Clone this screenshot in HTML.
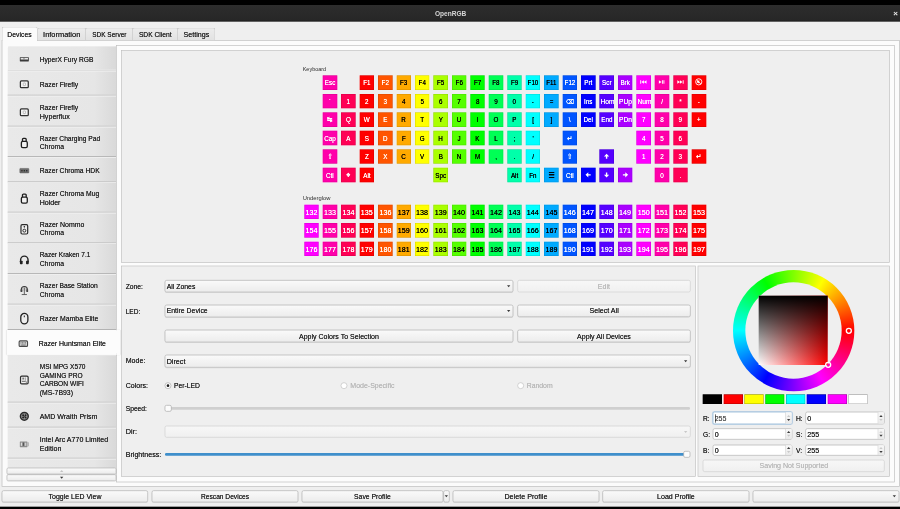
<!DOCTYPE html>
<html lang="en"><head><meta charset="utf-8"><title>OpenRGB</title>
<style>
html,body{margin:0;padding:0}
body{width:900px;height:509px;overflow:hidden;background:#efefef}
#w{filter:contrast(1.002);position:absolute;left:0;top:0;width:2700px;height:1527px;transform:scale(.333333);transform-origin:0 0;font-family:"Liberation Sans","DejaVu Sans",sans-serif;font-size:21.6px;color:#2a2a2a;line-height:25.8px}
div,span{box-sizing:border-box}
.a{position:absolute}
.t{position:absolute;white-space:nowrap;transform-origin:0 50%;transform:scaleX(.9);text-shadow:0 0 0.42px currentColor}
.tc{position:absolute;white-space:nowrap;text-align:center;transform:scaleX(.9);text-shadow:0 0 0.9px currentColor}
.frame{position:absolute;border:2.1px solid #bebebe}
.btn{position:absolute;border:2.1px solid #b2b2b2;border-radius:6px;background:linear-gradient(#fafafa,#ececec);box-shadow:0 1.8px 1.8px rgba(0,0,0,.10);text-align:center}
.btn.dis{background:linear-gradient(#f7f7f7,#f0f0f0);border-color:#d0d0d0;box-shadow:none;color:#bababa}
.btn span{display:inline-block;transform:scaleX(.9);text-shadow:0 0 0.42px currentColor}
.tab{position:absolute;border:2.1px solid #bdbdbd;border-bottom:none;border-radius:6px 6px 0 0;background:linear-gradient(#ececec,#e2e2e2);text-align:center}
.tab span{display:inline-block;transform:scaleX(.9);text-shadow:0 0 0.6px currentColor}
.item{position:absolute;left:22.5px;width:325.8px;background:linear-gradient(90deg,#e9e9e9 0,#e6e6e6 80%,#d9d9d9 100%);border-top:2.1px solid #ececec;border-bottom:3px solid #b8b8b8}
.item.sel{z-index:3;left:20.1px;width:340.8px;background:linear-gradient(#fcfcfc,#fcfcfc);border-color:#fcfcfc;box-shadow:0 0 3px rgba(0,0,0,.25)}
.item .lbl{position:absolute;left:96px;top:5.4px;bottom:0;display:flex;align-items:center}
.item .lbl span{display:block;transform-origin:0 50%;transform:scaleX(.925);text-shadow:0 0 0.66px currentColor}
.item svg{position:absolute;left:32.85px;top:50%;margin-top:-14.1px;overflow:visible}
.item.sel svg{left:31.8px}
.key{background:linear-gradient(var(--c),var(--c));position:absolute;width:43.5px;height:43.5px;overflow:hidden;text-align:center;line-height:45.6px;font-size:21.9px;box-shadow:inset 0 0 0 1.5px rgba(0,0,0,.16)}
.key span{display:inline-block;transform:scaleX(.86);white-space:nowrap;text-shadow:0 0 0.3px currentColor}
.key svg{position:absolute;left:0;top:0}
.key.n span{transform:scaleX(.98)}
.spin{position:absolute;border:2.1px solid #b4b4b4;border-radius:6px;background:linear-gradient(#fff,#fff)}
.spin .v{position:absolute;left:3.9px;top:1.2px;bottom:0;display:flex;align-items:center;transform-origin:0 50%;transform:scaleX(.96);font-size:22.2px;text-shadow:0 0 0.45px currentColor}
.spin .ud{position:absolute;right:0;top:0;bottom:0;width:19.2px;border-left:2.1px solid #d4d4d4;background:linear-gradient(#f8f8f8,#e9e9e9)}
.arr{position:absolute;width:0;height:0;border-left:5.1px solid transparent;border-right:5.1px solid transparent}
.arr.dn{border-top:6.3px solid #3a3a3a}
.arr.up{border-bottom:6.3px solid #3a3a3a}
.sw{position:absolute;top:1182.9px;height:29.1px;width:57.9px;box-shadow:inset 0 0 0 1.8px rgba(0,0,0,.32)}
</style></head>
<body><div id="w">
<div class="a" style="left:0;top:0;width:2700px;height:64.5px;background:linear-gradient(#000 0,#000 14.4px,#2d2d2d 14.7px,#272727 61.2px,#1c1c1c 62.1px,#1c1c1c 64.5px)"></div>
<div class="tc" style="left:1201.8px;width:300px;top:27.3px;font-weight:bold;color:#d6d6d6;font-size:21.6px;text-shadow:none;transform:scaleX(0.91)">OpenRGB</div>
<div class="a" style="left:2679.6px;top:25.8px;color:#e8e8e8;font-size:24px;font-weight:bold;line-height:27px">×</div>
<div class="a" style="left:0;top:1519.8px;width:2700px;height:9px;background:#000"></div>
<div class="frame" style="left:4.5px;top:120px;width:2694px;height:1339.5px;background:linear-gradient(#fbfbfb,#fbfbfb);border-color:#bdbdbd"></div>
<div class="tab" style="left:4.5px;top:79.8px;width:108.3px;height:43.8px;background:linear-gradient(#fbfbfb,#fbfbfb);line-height:45.6px;z-index:2"><span style="transform:scaleX(0.945)">Devices</span></div>
<div class="tab" style="left:111.9px;top:83.1px;width:147px;height:37.8px;line-height:37.2px"><span style="transform:scaleX(1.033)">Information</span></div>
<div class="tab" style="left:255.9px;top:83.1px;width:144px;height:37.8px;line-height:37.2px"><span style="transform:scaleX(0.902)">SDK Server</span></div>
<div class="tab" style="left:396.9px;top:83.1px;width:138px;height:37.8px;line-height:37.2px"><span style="transform:scaleX(0.931)">SDK Client</span></div>
<div class="tab" style="left:531.9px;top:83.1px;width:114px;height:37.8px;line-height:37.2px"><span style="transform:scaleX(0.992)">Settings</span></div>
<div class="frame" style="left:348px;top:135.6px;width:2337px;height:1311px;background:linear-gradient(#fcfcfc,#fcfcfc)"></div>
<div class="a" style="left:22.5px;top:135px;width:325.8px;height:1267.2px;border-radius:6px 0 0 0;overflow:hidden"></div>
<div class="item" style="top:137.1px;height:75.3px;border-radius:7.5px 0 0 0"><svg width="36" height="36" viewBox="0 0 12 12"><rect x="1.5" y="3.85" width="9" height="4.3" rx=".4" fill="#3a3a3a"/><rect x="2.3" y="4.6" width="3" height="1.6" fill="#e6e6e6"/><rect x="6" y="4.6" width="3.7" height="1.6" fill="#e6e6e6"/><rect x="5.3" y="5.4" width=".7" height=".8" fill="#e6e6e6"/></svg><div class="lbl" style="top:9.6px"><div><span style="transform:scaleX(0.927)">HyperX Fury RGB</span></div></div></div>
<div class="item" style="top:212.4px;height:75px"><svg width="36" height="36" viewBox="0 0 12 12"><rect x="2.05" y="2.6" width="7.9" height="6.8" rx="1" fill="#f3f3f3" stroke="#333" stroke-width="1.25"/><rect x="4.9" y="4.6" width="2.2" height="2.7" rx=".4" fill="#fafafa" stroke="#9a9a9a" stroke-width=".6"/></svg><div class="lbl" style="top:9.6px"><div><span style="transform:scaleX(0.943)">Razer Firefly</span></div></div></div>
<div class="item" style="top:287.4px;height:92.4px"><svg width="36" height="36" viewBox="0 0 12 12"><rect x="2.05" y="2.6" width="7.9" height="6.8" rx="1" fill="#f3f3f3" stroke="#333" stroke-width="1.25"/><rect x="4.9" y="4.6" width="2.2" height="2.7" rx=".4" fill="#fafafa" stroke="#9a9a9a" stroke-width=".6"/></svg><div class="lbl"><div><span style="transform:scaleX(0.943)">Razer Firefly</span><span style="transform:scaleX(0.993)">Hyperflux</span></div></div></div>
<div class="item" style="top:379.8px;height:91.2px"><svg width="36" height="36" viewBox="0 0 12 12"><path d="M4.15 4.3 V2.4 a.95 .95 0 0 1 .95 -.95 h1.8 a.95 .95 0 0 1 .95 .95 V4.3" fill="#e8e8e8" stroke="#1e1e1e" stroke-width="1.3"/><rect x="3.05" y="4.45" width="5.9" height="6.1" rx="1.4" fill="#f2f2f2" stroke="#1e1e1e" stroke-width="1.3"/></svg><div class="lbl"><div><span style="transform:scaleX(0.927)">Razer Charging Pad</span><span style="transform:scaleX(0.949)">Chroma</span></div></div></div>
<div class="item" style="top:471px;height:75.6px"><svg width="36" height="36" viewBox="0 0 12 12"><rect x="1.5" y="3.75" width="9" height="4.5" rx=".5" fill="#6e6e6e"/><rect x="1.5" y="3.75" width="9" height="4.5" rx=".5" fill="none" stroke="#5a5a5a" stroke-width=".5"/><circle cx="3.6" cy="6" r=".75" fill="#2a2020"/><circle cx="6" cy="6" r=".75" fill="#202a20"/><circle cx="8.4" cy="6" r=".75" fill="#20202a"/></svg><div class="lbl" style="top:9.6px"><div><span style="transform:scaleX(0.937)">Razer Chroma HDK</span></div></div></div>
<div class="item" style="top:546.6px;height:91.8px"><svg width="36" height="36" viewBox="0 0 12 12"><path d="M4.15 4.3 V2.4 a.95 .95 0 0 1 .95 -.95 h1.8 a.95 .95 0 0 1 .95 .95 V4.3" fill="#e8e8e8" stroke="#1e1e1e" stroke-width="1.3"/><rect x="3.05" y="4.45" width="5.9" height="6.1" rx="1.4" fill="#f2f2f2" stroke="#1e1e1e" stroke-width="1.3"/></svg><div class="lbl"><div><span style="transform:scaleX(0.95)">Razer Chroma Mug</span><span style="transform:scaleX(0.981)">Holder</span></div></div></div>
<div class="item" style="top:638.4px;height:91.8px"><svg width="36" height="36" viewBox="0 0 12 12"><rect x="2.65" y="1.35" width="6.7" height="9.3" rx="1.2" fill="#eeeeee" stroke="#2a2a2a" stroke-width="1.2"/><circle cx="6" cy="3.5" r=".8" fill="#222"/><circle cx="6" cy="7.3" r="1.45" fill="#f6f6f6" stroke="#2a2a2a" stroke-width="1"/></svg><div class="lbl"><div><span style="transform:scaleX(0.963)">Razer Nommo</span><span style="transform:scaleX(0.949)">Chroma</span></div></div></div>
<div class="item" style="top:730.2px;height:91.8px"><svg width="36" height="36" viewBox="0 0 12 12"><path d="M2.3 8.8 V6.2 a3.7 3.7 0 0 1 7.4 0 V8.8" fill="none" stroke="#222" stroke-width="1.4"/><rect x="1.6" y="7" width="2.7" height="3.5" rx=".7" fill="#222"/><rect x="7.7" y="7" width="2.7" height="3.5" rx=".7" fill="#222"/></svg><div class="lbl"><div><span style="transform:scaleX(0.905)">Razer Kraken 7.1</span><span style="transform:scaleX(0.949)">Chroma</span></div></div></div>
<div class="item" style="top:822px;height:92.1px"><svg width="36" height="36" viewBox="0 0 12 12"><path d="M3 6.8 V5.2 a3 3 0 0 1 6 0 V6.8" fill="#d0d0d0" stroke="#3a3a3a" stroke-width="1.1"/><rect x="2.2" y="4.8" width="1.8" height="2.8" rx=".5" fill="#444"/><rect x="8" y="4.8" width="1.8" height="2.8" rx=".5" fill="#444"/><path d="M6 3.2 V10.2" stroke="#666" stroke-width="1"/><path d="M3.4 10.2 H8.6" stroke="#555" stroke-width=".9"/></svg><div class="lbl"><div><span style="transform:scaleX(0.935)">Razer Base Station</span><span style="transform:scaleX(0.949)">Chroma</span></div></div></div>
<div class="item" style="top:914.1px;height:76.2px"><svg width="36" height="36" viewBox="0 0 12 12"><rect x="2.45" y=".75" width="7.1" height="10.5" rx="3.55" fill="#ededed" stroke="#222" stroke-width="1.3"/><path d="M6 2.9 V4.7" stroke="#333" stroke-width="1.1"/></svg><div class="lbl" style="top:9.6px"><div><span style="transform:scaleX(0.959)">Razer Mamba Elite</span></div></div></div>
<div class="item sel" style="top:990.3px;height:74.1px"><svg width="36" height="36" viewBox="0 0 12 12"><rect x="1.8" y="3.25" width="8.4" height="5.5" rx="1" fill="#d8d8d8" stroke="#4a4a4a" stroke-width="1.1"/><path d="M3.2 5 h5.6" stroke="#666" stroke-width=".8" stroke-dasharray="1 .5"/><path d="M3.2 6.2 h5.6" stroke="#777" stroke-width=".8" stroke-dasharray=".9 .6"/><path d="M3.8 7.4 h4.4" stroke="#666" stroke-width=".8"/></svg><div class="lbl" style="top:9.6px"><div><span style="transform:scaleX(0.961)">Razer Huntsman Elite</span></div></div></div>
<div class="item" style="top:1064.4px;height:144px"><svg width="36" height="36" viewBox="0 0 12 12"><rect x="2.2" y="2.1" width="7.6" height="7.8" rx="1.2" fill="#f1f1f1" stroke="#2c2c2c" stroke-width="1.2"/><rect x="4" y="3.6" width="1.9" height="1.9" fill="#777"/><path d="M7.2 3.4 V6.6" stroke="#999" stroke-width=".8"/><path d="M3.6 7.3 H7.4" stroke="#555" stroke-width=".9"/><circle cx="8" cy="8.1" r=".6" fill="#555"/></svg><div class="lbl"><div><span style="transform:scaleX(0.916)">MSI MPG X570</span><span style="transform:scaleX(0.919)">GAMING PRO</span><span style="transform:scaleX(0.923)">CARBON WIFI</span><span style="transform:scaleX(0.957)">(MS-7B93)</span></div></div></div>
<div class="item" style="top:1208.4px;height:75px"><svg width="36" height="36" viewBox="0 0 12 12"><circle cx="6" cy="6" r="3.9" fill="#9a9a9a" stroke="#2b2b2b" stroke-width="1.5"/><circle cx="4.8" cy="4.8" r="1" fill="#222"/><circle cx="7.2" cy="4.8" r="1" fill="#222"/><circle cx="4.8" cy="7.2" r="1" fill="#222"/><circle cx="7.2" cy="7.2" r="1" fill="#222"/><circle cx="6" cy="6" r=".7" fill="#444"/></svg><div class="lbl" style="top:9.6px"><div><span style="transform:scaleX(0.977)">AMD Wraith Prism</span></div></div></div>
<div class="item" style="top:1283.4px;height:92.4px"><svg width="36" height="36" viewBox="0 0 12 12"><rect x="1.5" y="3.2" width="7.6" height="5.6" rx=".4" fill="#8c8c8c"/><path d="M9.1 3.6 h.4 a1.1 1.1 0 0 1 1.1 1.1 v2.4 a1.1 1.1 0 0 1 -1.1 1.1 h-.4z" fill="#b4b4b4"/><rect x="2.5" y="4.3" width="1.3" height="3.2" fill="#dcdcdc"/><rect x="4.6" y="4.3" width="1.1" height="3.2" fill="#555"/><rect x="6.4" y="4.3" width="1.6" height="3.2" fill="#cfcfcf"/></svg><div class="lbl"><div><span style="transform:scaleX(0.984)">Intel Arc A770 Limited</span><span style="transform:scaleX(0.986)">Edition</span></div></div></div>
<div class="item" style="top:1375.8px;height:27.9px;border-bottom:none"><div class="lbl"><div></div></div></div>
<div class="btn" style="left:20.1px;top:1403.4px;width:328.8px;height:19.8px;border-radius:4.5px"><div class="arr up" style="left:157.8px;top:4.2px;border-bottom-color:#c4c4c4"></div></div>
<div class="btn" style="left:20.1px;top:1423.2px;width:328.8px;height:20.1px;border-radius:4.5px"><div class="arr dn" style="left:157.8px;top:4.8px"></div></div>
<div class="frame" style="left:363px;top:150px;width:2307px;height:639px;background:linear-gradient(#efefef,#efefef)"></div>
<div class="frame" style="left:363px;top:796.5px;width:1723.5px;height:633.9px;background:linear-gradient(#efefef,#efefef)"></div>
<div class="frame" style="left:2093.1px;top:796.5px;width:577.2px;height:633.9px;background:linear-gradient(#efefef,#efefef)"></div>
<div class="t" style="left:907.5px;top:195px;font-size:18px;color:#2c2c2c;text-shadow:none;transform:scaleX(0.915)">Keyboard</div>
<div class="key" style="left:968.1px;top:226.35px;--c:#ff00aa;color:#fff"><span>Esc</span></div>
<div class="key" style="left:1078.8px;top:226.35px;--c:#ff0000;color:#fff"><span>F1</span></div>
<div class="key" style="left:1134.15px;top:226.35px;--c:#ff5500;color:#fff"><span>F2</span></div>
<div class="key" style="left:1189.5px;top:226.35px;--c:#ffaa00;color:#000"><span>F3</span></div>
<div class="key" style="left:1244.85px;top:226.35px;--c:#ffff00;color:#000"><span>F4</span></div>
<div class="key" style="left:1300.2px;top:226.35px;--c:#aaff00;color:#000"><span>F5</span></div>
<div class="key" style="left:1355.55px;top:226.35px;--c:#55ff00;color:#000"><span>F6</span></div>
<div class="key" style="left:1410.9px;top:226.35px;--c:#00ff00;color:#000"><span>F7</span></div>
<div class="key" style="left:1466.25px;top:226.35px;--c:#00ff55;color:#000"><span>F8</span></div>
<div class="key" style="left:1521.6px;top:226.35px;--c:#00ffaa;color:#000"><span>F9</span></div>
<div class="key" style="left:1576.95px;top:226.35px;--c:#00ffff;color:#000"><span>F10</span></div>
<div class="key" style="left:1632.3px;top:226.35px;--c:#00aaff;color:#000"><span>F11</span></div>
<div class="key" style="left:1687.65px;top:226.35px;--c:#0055ff;color:#fff"><span>F12</span></div>
<div class="key" style="left:1743px;top:226.35px;--c:#0000ff;color:#fff"><span>Prt</span></div>
<div class="key" style="left:1798.35px;top:226.35px;--c:#5500ff;color:#fff"><span>Scr</span></div>
<div class="key" style="left:1853.7px;top:226.35px;--c:#aa00ff;color:#fff"><span>Brk</span></div>
<div class="key" style="left:1909.05px;top:226.35px;--c:#ff00ff;color:#fff"><svg width="44.4" height="44.4" viewBox="0 0 14.8 14.8" fill="#fff" stroke="none"><rect x="3.9" y="4.9" width=".9" height="3.5"/><path d="M7.6 4.9 L5 6.65 L7.6 8.4Z M10.2 4.9 L7.6 6.65 L10.2 8.4Z"/></svg></div>
<div class="key" style="left:1964.4px;top:226.35px;--c:#ff00aa;color:#fff"><svg width="44.4" height="44.4" viewBox="0 0 14.8 14.8" fill="#fff" stroke="none"><path d="M4.2 4.9 L6.9 6.65 L4.2 8.4Z"/><rect x="7.3" y="4.9" width=".9" height="3.5"/><rect x="8.8" y="4.9" width=".9" height="3.5"/></svg></div>
<div class="key" style="left:2019.75px;top:226.35px;--c:#ff0055;color:#fff"><svg width="44.4" height="44.4" viewBox="0 0 14.8 14.8" fill="#fff" stroke="none"><path d="M4 4.9 L6.6 6.65 L4 8.4Z M6.6 4.9 L9.2 6.65 L6.6 8.4Z"/><rect x="9.4" y="4.9" width=".9" height="3.5"/></svg></div>
<div class="key" style="left:2075.1px;top:226.35px;--c:#ff0000;color:#fff"><svg width="44.4" height="44.4" viewBox="0 0 14.8 14.8" fill="#fff" stroke="none"><circle cx="7.1" cy="6.5" r="3.1" fill="none" stroke="#fff" stroke-width=".9"/><path d="M5.4 5.7 h1 l1.2-1 v3.6 l-1.2-1 h-1z"/><path d="M5.2 4.4 L9.2 8.6" stroke="#fff" stroke-width=".8"/></svg></div>
<div class="key" style="left:968.1px;top:281.7px;--c:#ff00aa;color:#fff"><span>`</span></div>
<div class="key" style="left:1023.45px;top:281.7px;--c:#ff0055;color:#fff"><span>1</span></div>
<div class="key" style="left:1078.8px;top:281.7px;--c:#ff0000;color:#fff"><span>2</span></div>
<div class="key" style="left:1134.15px;top:281.7px;--c:#ff5500;color:#fff"><span>3</span></div>
<div class="key" style="left:1189.5px;top:281.7px;--c:#ffaa00;color:#000"><span>4</span></div>
<div class="key" style="left:1244.85px;top:281.7px;--c:#ffff00;color:#000"><span>5</span></div>
<div class="key" style="left:1300.2px;top:281.7px;--c:#aaff00;color:#000"><span>6</span></div>
<div class="key" style="left:1355.55px;top:281.7px;--c:#55ff00;color:#000"><span>7</span></div>
<div class="key" style="left:1410.9px;top:281.7px;--c:#00ff00;color:#000"><span>8</span></div>
<div class="key" style="left:1466.25px;top:281.7px;--c:#00ff55;color:#000"><span>9</span></div>
<div class="key" style="left:1521.6px;top:281.7px;--c:#00ffaa;color:#000"><span>0</span></div>
<div class="key" style="left:1576.95px;top:281.7px;--c:#00ffff;color:#000"><span>-</span></div>
<div class="key" style="left:1632.3px;top:281.7px;--c:#00aaff;color:#000"><span>=</span></div>
<div class="key" style="left:1687.65px;top:281.7px;--c:#0055ff;color:#fff;font-size:19.5px"><span>⌫</span></div>
<div class="key" style="left:1743px;top:281.7px;--c:#0000ff;color:#fff"><span>Ins</span></div>
<div class="key" style="left:1798.35px;top:281.7px;--c:#5500ff;color:#fff;font-size:23.1px"><span>Hom</span></div>
<div class="key" style="left:1853.7px;top:281.7px;--c:#aa00ff;color:#fff;font-size:23.1px"><span>PUp</span></div>
<div class="key" style="left:1909.05px;top:281.7px;--c:#ff00ff;color:#fff;font-size:23.1px"><span>Num</span></div>
<div class="key" style="left:1964.4px;top:281.7px;--c:#ff00aa;color:#fff"><span>/</span></div>
<div class="key" style="left:2019.75px;top:281.7px;--c:#ff0055;color:#fff"><span>*</span></div>
<div class="key" style="left:2075.1px;top:281.7px;--c:#ff0000;color:#fff"><span>-</span></div>
<div class="key" style="left:968.1px;top:337.05px;--c:#ff00aa;color:#fff;font-size:22.8px"><span>↹</span></div>
<div class="key" style="left:1023.45px;top:337.05px;--c:#ff0055;color:#fff"><span>Q</span></div>
<div class="key" style="left:1078.8px;top:337.05px;--c:#ff0000;color:#fff"><span>W</span></div>
<div class="key" style="left:1134.15px;top:337.05px;--c:#ff5500;color:#fff"><span>E</span></div>
<div class="key" style="left:1189.5px;top:337.05px;--c:#ffaa00;color:#000"><span>R</span></div>
<div class="key" style="left:1244.85px;top:337.05px;--c:#ffff00;color:#000"><span>T</span></div>
<div class="key" style="left:1300.2px;top:337.05px;--c:#aaff00;color:#000"><span>Y</span></div>
<div class="key" style="left:1355.55px;top:337.05px;--c:#55ff00;color:#000"><span>U</span></div>
<div class="key" style="left:1410.9px;top:337.05px;--c:#00ff00;color:#000"><span>I</span></div>
<div class="key" style="left:1466.25px;top:337.05px;--c:#00ff55;color:#000"><span>O</span></div>
<div class="key" style="left:1521.6px;top:337.05px;--c:#00ffaa;color:#000"><span>P</span></div>
<div class="key" style="left:1576.95px;top:337.05px;--c:#00ffff;color:#000"><span>[</span></div>
<div class="key" style="left:1632.3px;top:337.05px;--c:#00aaff;color:#000"><span>]</span></div>
<div class="key" style="left:1687.65px;top:337.05px;--c:#0055ff;color:#fff"><span>\</span></div>
<div class="key" style="left:1743px;top:337.05px;--c:#0000ff;color:#fff"><span>Del</span></div>
<div class="key" style="left:1798.35px;top:337.05px;--c:#5500ff;color:#fff"><span>End</span></div>
<div class="key" style="left:1853.7px;top:337.05px;--c:#aa00ff;color:#fff;font-size:23.1px"><span>PDn</span></div>
<div class="key" style="left:1909.05px;top:337.05px;--c:#ff00ff;color:#fff"><span>7</span></div>
<div class="key" style="left:1964.4px;top:337.05px;--c:#ff00aa;color:#fff"><span>8</span></div>
<div class="key" style="left:2019.75px;top:337.05px;--c:#ff0055;color:#fff"><span>9</span></div>
<div class="key" style="left:2075.1px;top:337.05px;--c:#ff0000;color:#fff"><span>+</span></div>
<div class="key" style="left:968.1px;top:392.4px;--c:#ff00aa;color:#fff"><span>Cap</span></div>
<div class="key" style="left:1023.45px;top:392.4px;--c:#ff0055;color:#fff"><span>A</span></div>
<div class="key" style="left:1078.8px;top:392.4px;--c:#ff0000;color:#fff"><span>S</span></div>
<div class="key" style="left:1134.15px;top:392.4px;--c:#ff5500;color:#fff"><span>D</span></div>
<div class="key" style="left:1189.5px;top:392.4px;--c:#ffaa00;color:#000"><span>F</span></div>
<div class="key" style="left:1244.85px;top:392.4px;--c:#ffff00;color:#000"><span>G</span></div>
<div class="key" style="left:1300.2px;top:392.4px;--c:#aaff00;color:#000"><span>H</span></div>
<div class="key" style="left:1355.55px;top:392.4px;--c:#55ff00;color:#000"><span>J</span></div>
<div class="key" style="left:1410.9px;top:392.4px;--c:#00ff00;color:#000"><span>K</span></div>
<div class="key" style="left:1466.25px;top:392.4px;--c:#00ff55;color:#000"><span>L</span></div>
<div class="key" style="left:1521.6px;top:392.4px;--c:#00ffaa;color:#000"><span>;</span></div>
<div class="key" style="left:1576.95px;top:392.4px;--c:#00ffff;color:#000"><span>&#x27;</span></div>
<div class="key" style="left:1687.65px;top:392.4px;--c:#0055ff;color:#fff;font-size:22.8px"><span>↵</span></div>
<div class="key" style="left:1909.05px;top:392.4px;--c:#ff00ff;color:#fff"><span>4</span></div>
<div class="key" style="left:1964.4px;top:392.4px;--c:#ff00aa;color:#fff"><span>5</span></div>
<div class="key" style="left:2019.75px;top:392.4px;--c:#ff0055;color:#fff"><span>6</span></div>
<div class="key" style="left:968.1px;top:447.75px;--c:#ff00aa;color:#fff;font-size:22.2px"><span>⇧</span></div>
<div class="key" style="left:1078.8px;top:447.75px;--c:#ff0000;color:#fff"><span>Z</span></div>
<div class="key" style="left:1134.15px;top:447.75px;--c:#ff5500;color:#fff"><span>X</span></div>
<div class="key" style="left:1189.5px;top:447.75px;--c:#ffaa00;color:#000"><span>C</span></div>
<div class="key" style="left:1244.85px;top:447.75px;--c:#ffff00;color:#000"><span>V</span></div>
<div class="key" style="left:1300.2px;top:447.75px;--c:#aaff00;color:#000"><span>B</span></div>
<div class="key" style="left:1355.55px;top:447.75px;--c:#55ff00;color:#000"><span>N</span></div>
<div class="key" style="left:1410.9px;top:447.75px;--c:#00ff00;color:#000"><span>M</span></div>
<div class="key" style="left:1466.25px;top:447.75px;--c:#00ff55;color:#000"><span>,</span></div>
<div class="key" style="left:1521.6px;top:447.75px;--c:#00ffaa;color:#000"><span>.</span></div>
<div class="key" style="left:1576.95px;top:447.75px;--c:#00ffff;color:#000"><span>/</span></div>
<div class="key" style="left:1687.65px;top:447.75px;--c:#0055ff;color:#fff;font-size:22.2px"><span>⇧</span></div>
<div class="key" style="left:1798.35px;top:447.75px;--c:#5500ff;color:#fff;font-size:18px"><svg width="44.4" height="44.4" viewBox="0 0 14.8 14.8" fill="#fff" stroke="none"><path d="M7.25 4.4 L9.85 7.2 H7.95 V9.4 H6.55 V7.2 H4.65Z"/></svg></div>
<div class="key" style="left:1909.05px;top:447.75px;--c:#ff00ff;color:#fff"><span>1</span></div>
<div class="key" style="left:1964.4px;top:447.75px;--c:#ff00aa;color:#fff"><span>2</span></div>
<div class="key" style="left:2019.75px;top:447.75px;--c:#ff0055;color:#fff"><span>3</span></div>
<div class="key" style="left:2075.1px;top:447.75px;--c:#ff0000;color:#fff;font-size:22.8px"><span>↵</span></div>
<div class="key" style="left:968.1px;top:503.1px;--c:#ff00aa;color:#fff"><span>Ctl</span></div>
<div class="key" style="left:1023.45px;top:503.1px;--c:#ff0055;color:#fff;font-size:18px"><span>❖</span></div>
<div class="key" style="left:1078.8px;top:503.1px;--c:#ff0000;color:#fff"><span>Alt</span></div>
<div class="key" style="left:1300.2px;top:503.1px;--c:#aaff00;color:#000"><span>Spc</span></div>
<div class="key" style="left:1521.6px;top:503.1px;--c:#00ffaa;color:#000"><span>Alt</span></div>
<div class="key" style="left:1576.95px;top:503.1px;--c:#00ffff;color:#000"><span>Fn</span></div>
<div class="key" style="left:1632.3px;top:503.1px;--c:#00aaff;color:#000;font-size:25.2px"><span>☰</span></div>
<div class="key" style="left:1687.65px;top:503.1px;--c:#0055ff;color:#fff"><span>Ctl</span></div>
<div class="key" style="left:1743px;top:503.1px;--c:#0000ff;color:#fff;font-size:18px"><svg width="44.4" height="44.4" viewBox="0 0 14.8 14.8" fill="#fff" stroke="none"><path d="M4.5 7.2 L7.3 4.6 V6.5 H9.7 V7.9 H7.3 V9.8Z"/></svg></div>
<div class="key" style="left:1798.35px;top:503.1px;--c:#5500ff;color:#fff;font-size:18px"><svg width="44.4" height="44.4" viewBox="0 0 14.8 14.8" fill="#fff" stroke="none"><path d="M7.25 9.8 L9.85 7 H7.95 V4.8 H6.55 V7 H4.65Z"/></svg></div>
<div class="key" style="left:1853.7px;top:503.1px;--c:#aa00ff;color:#fff;font-size:18px"><svg width="44.4" height="44.4" viewBox="0 0 14.8 14.8" fill="#fff" stroke="none"><path d="M10.1 7.2 L7.3 4.6 V6.5 H4.9 V7.9 H7.3 V9.8Z"/></svg></div>
<div class="key" style="left:1964.4px;top:503.1px;--c:#ff00aa;color:#fff"><span>0</span></div>
<div class="key" style="left:2019.75px;top:503.1px;--c:#ff0055;color:#fff"><span>.</span></div>
<div class="t" style="left:907.5px;top:581.1px;font-size:18px;color:#2c2c2c;text-shadow:none;transform:scaleX(0.966)">Underglow</div>
<div class="key n" style="left:912.75px;top:613.8px;--c:#ff00ff;color:#fff"><span>132</span></div>
<div class="key n" style="left:968.1px;top:613.8px;--c:#ff00aa;color:#fff"><span>133</span></div>
<div class="key n" style="left:1023.45px;top:613.8px;--c:#ff0055;color:#fff"><span>134</span></div>
<div class="key n" style="left:1078.8px;top:613.8px;--c:#ff0000;color:#fff"><span>135</span></div>
<div class="key n" style="left:1134.15px;top:613.8px;--c:#ff5500;color:#fff"><span>136</span></div>
<div class="key n" style="left:1189.5px;top:613.8px;--c:#ffaa00;color:#000"><span>137</span></div>
<div class="key n" style="left:1244.85px;top:613.8px;--c:#ffff00;color:#000"><span>138</span></div>
<div class="key n" style="left:1300.2px;top:613.8px;--c:#aaff00;color:#000"><span>139</span></div>
<div class="key n" style="left:1355.55px;top:613.8px;--c:#55ff00;color:#000"><span>140</span></div>
<div class="key n" style="left:1410.9px;top:613.8px;--c:#00ff00;color:#000"><span>141</span></div>
<div class="key n" style="left:1466.25px;top:613.8px;--c:#00ff55;color:#000"><span>142</span></div>
<div class="key n" style="left:1521.6px;top:613.8px;--c:#00ffaa;color:#000"><span>143</span></div>
<div class="key n" style="left:1576.95px;top:613.8px;--c:#00ffff;color:#000"><span>144</span></div>
<div class="key n" style="left:1632.3px;top:613.8px;--c:#00aaff;color:#000"><span>145</span></div>
<div class="key n" style="left:1687.65px;top:613.8px;--c:#0055ff;color:#fff"><span>146</span></div>
<div class="key n" style="left:1743px;top:613.8px;--c:#0000ff;color:#fff"><span>147</span></div>
<div class="key n" style="left:1798.35px;top:613.8px;--c:#5500ff;color:#fff"><span>148</span></div>
<div class="key n" style="left:1853.7px;top:613.8px;--c:#aa00ff;color:#fff"><span>149</span></div>
<div class="key n" style="left:1909.05px;top:613.8px;--c:#ff00ff;color:#fff"><span>150</span></div>
<div class="key n" style="left:1964.4px;top:613.8px;--c:#ff00aa;color:#fff"><span>151</span></div>
<div class="key n" style="left:2019.75px;top:613.8px;--c:#ff0055;color:#fff"><span>152</span></div>
<div class="key n" style="left:2075.1px;top:613.8px;--c:#ff0000;color:#fff"><span>153</span></div>
<div class="key n" style="left:912.75px;top:669.15px;--c:#ff00ff;color:#fff"><span>154</span></div>
<div class="key n" style="left:968.1px;top:669.15px;--c:#ff00aa;color:#fff"><span>155</span></div>
<div class="key n" style="left:1023.45px;top:669.15px;--c:#ff0055;color:#fff"><span>156</span></div>
<div class="key n" style="left:1078.8px;top:669.15px;--c:#ff0000;color:#fff"><span>157</span></div>
<div class="key n" style="left:1134.15px;top:669.15px;--c:#ff5500;color:#fff"><span>158</span></div>
<div class="key n" style="left:1189.5px;top:669.15px;--c:#ffaa00;color:#000"><span>159</span></div>
<div class="key n" style="left:1244.85px;top:669.15px;--c:#ffff00;color:#000"><span>160</span></div>
<div class="key n" style="left:1300.2px;top:669.15px;--c:#aaff00;color:#000"><span>161</span></div>
<div class="key n" style="left:1355.55px;top:669.15px;--c:#55ff00;color:#000"><span>162</span></div>
<div class="key n" style="left:1410.9px;top:669.15px;--c:#00ff00;color:#000"><span>163</span></div>
<div class="key n" style="left:1466.25px;top:669.15px;--c:#00ff55;color:#000"><span>164</span></div>
<div class="key n" style="left:1521.6px;top:669.15px;--c:#00ffaa;color:#000"><span>165</span></div>
<div class="key n" style="left:1576.95px;top:669.15px;--c:#00ffff;color:#000"><span>166</span></div>
<div class="key n" style="left:1632.3px;top:669.15px;--c:#00aaff;color:#000"><span>167</span></div>
<div class="key n" style="left:1687.65px;top:669.15px;--c:#0055ff;color:#fff"><span>168</span></div>
<div class="key n" style="left:1743px;top:669.15px;--c:#0000ff;color:#fff"><span>169</span></div>
<div class="key n" style="left:1798.35px;top:669.15px;--c:#5500ff;color:#fff"><span>170</span></div>
<div class="key n" style="left:1853.7px;top:669.15px;--c:#aa00ff;color:#fff"><span>171</span></div>
<div class="key n" style="left:1909.05px;top:669.15px;--c:#ff00ff;color:#fff"><span>172</span></div>
<div class="key n" style="left:1964.4px;top:669.15px;--c:#ff00aa;color:#fff"><span>173</span></div>
<div class="key n" style="left:2019.75px;top:669.15px;--c:#ff0055;color:#fff"><span>174</span></div>
<div class="key n" style="left:2075.1px;top:669.15px;--c:#ff0000;color:#fff"><span>175</span></div>
<div class="key n" style="left:912.75px;top:724.5px;--c:#ff00ff;color:#fff"><span>176</span></div>
<div class="key n" style="left:968.1px;top:724.5px;--c:#ff00aa;color:#fff"><span>177</span></div>
<div class="key n" style="left:1023.45px;top:724.5px;--c:#ff0055;color:#fff"><span>178</span></div>
<div class="key n" style="left:1078.8px;top:724.5px;--c:#ff0000;color:#fff"><span>179</span></div>
<div class="key n" style="left:1134.15px;top:724.5px;--c:#ff5500;color:#fff"><span>180</span></div>
<div class="key n" style="left:1189.5px;top:724.5px;--c:#ffaa00;color:#000"><span>181</span></div>
<div class="key n" style="left:1244.85px;top:724.5px;--c:#ffff00;color:#000"><span>182</span></div>
<div class="key n" style="left:1300.2px;top:724.5px;--c:#aaff00;color:#000"><span>183</span></div>
<div class="key n" style="left:1355.55px;top:724.5px;--c:#55ff00;color:#000"><span>184</span></div>
<div class="key n" style="left:1410.9px;top:724.5px;--c:#00ff00;color:#000"><span>185</span></div>
<div class="key n" style="left:1466.25px;top:724.5px;--c:#00ff55;color:#000"><span>186</span></div>
<div class="key n" style="left:1521.6px;top:724.5px;--c:#00ffaa;color:#000"><span>187</span></div>
<div class="key n" style="left:1576.95px;top:724.5px;--c:#00ffff;color:#000"><span>188</span></div>
<div class="key n" style="left:1632.3px;top:724.5px;--c:#00aaff;color:#000"><span>189</span></div>
<div class="key n" style="left:1687.65px;top:724.5px;--c:#0055ff;color:#fff"><span>190</span></div>
<div class="key n" style="left:1743px;top:724.5px;--c:#0000ff;color:#fff"><span>191</span></div>
<div class="key n" style="left:1798.35px;top:724.5px;--c:#5500ff;color:#fff"><span>192</span></div>
<div class="key n" style="left:1853.7px;top:724.5px;--c:#aa00ff;color:#fff"><span>193</span></div>
<div class="key n" style="left:1909.05px;top:724.5px;--c:#ff00ff;color:#fff"><span>194</span></div>
<div class="key n" style="left:1964.4px;top:724.5px;--c:#ff00aa;color:#fff"><span>195</span></div>
<div class="key n" style="left:2019.75px;top:724.5px;--c:#ff0055;color:#fff"><span>196</span></div>
<div class="key n" style="left:2075.1px;top:724.5px;--c:#ff0000;color:#fff"><span>197</span></div>
<div class="t" style="left:377.4px;top:845.7px;transform:scaleX(0.94)">Zone:</div>
<div class="btn" style="left:494.1px;top:840px;width:1046.4px;height:36.6px;text-align:left;line-height:33.6px"><span style="margin-left:4.2px;transform-origin:0 50%;transform:scaleX(0.956)">All Zones</span><div class="arr dn" style="right:7.8px;top:13.8px;border-top-color:#3a3a3a"></div></div>
<div class="btn dis" style="left:1551.9px;top:840px;width:520.2px;height:36.6px;line-height:33.9px"><span style="transform:scaleX(0.991)">Edit</span></div>
<div class="t" style="left:377.4px;top:921.3px;transform:scaleX(0.918)">LED:</div>
<div class="btn" style="left:494.1px;top:914.1px;width:1046.4px;height:37.5px;text-align:left;line-height:34.5px"><span style="margin-left:4.2px;transform-origin:0 50%;transform:scaleX(0.958)">Entire Device</span><div class="arr dn" style="right:7.8px;top:14.4px;border-top-color:#3a3a3a"></div></div>
<div class="btn" style="left:1551.9px;top:914.1px;width:520.2px;height:37.2px;line-height:34.5px"><span style="transform:scaleX(0.989)">Select All</span></div>
<div class="btn" style="left:494.1px;top:988.5px;width:1046.4px;height:38.4px;line-height:35.7px"><span style="transform:scaleX(0.977)">Apply Colors To Selection</span></div>
<div class="btn" style="left:1551.9px;top:988.5px;width:520.2px;height:38.4px;line-height:35.7px"><span style="transform:scaleX(0.972)">Apply All Devices</span></div>
<div class="t" style="left:377.4px;top:1070.1px;transform:scaleX(0.984)">Mode:</div>
<div class="btn" style="left:494.1px;top:1063.5px;width:1578px;height:39px;text-align:left;line-height:36px"><span style="margin-left:4.2px;transform-origin:0 50%;transform:scaleX(0.995)">Direct</span><div class="arr dn" style="right:7.8px;top:15px;border-top-color:#3a3a3a"></div></div>
<div class="t" style="left:377.4px;top:1145.4px;transform:scaleX(0.978)">Colors:</div>
<div class="a" style="left:493.8px;top:1147.2px;width:19.8px;height:19.8px;border-radius:50%;border:2.4px solid #a6a6a6;background:#fff"></div>
<div class="a" style="left:499.5px;top:1152.9px;width:8.4px;height:8.4px;border-radius:50%;background:#1c1c1c"></div>
<div class="t" style="left:522.3px;top:1144.5px;transform:scaleX(0.942)">Per-LED</div>
<div class="a" style="left:1022.1px;top:1147.2px;width:19.8px;height:19.8px;border-radius:50%;border:2.4px solid #bfbfbf;background:#fff"></div>
<div class="t" style="left:1050.6px;top:1144.5px;color:#b9b9b9;transform:scaleX(0.971)">Mode-Specific</div>
<div class="a" style="left:1551.9px;top:1147.2px;width:19.8px;height:19.8px;border-radius:50%;border:2.4px solid #bfbfbf;background:#fff"></div>
<div class="t" style="left:1580.4px;top:1144.5px;color:#b9b9b9;transform:scaleX(0.955)">Random</div>
<div class="t" style="left:377.4px;top:1211.7px;transform:scaleX(0.933)">Speed:</div>
<div class="a" style="left:495px;top:1221.3px;width:1575px;height:7.5px;border-radius:3.6px;background:#cfcfcf"></div>
<div class="a" style="left:493.5px;top:1215px;width:21px;height:19.8px;border-radius:5.4px;border:2.4px solid #a8a8a8;background:#fcfcfc"></div>
<div class="t" style="left:377.4px;top:1282.5px;transform:scaleX(1.009)">Dir:</div>
<div class="btn dis" style="left:494.1px;top:1277.4px;width:1578px;height:35.4px;text-align:left;line-height:32.4px"><span style="margin-left:4.2px;transform-origin:0 50%;transform:scaleX(0.93)"></span><div class="arr dn" style="right:7.8px;top:13.2px;border-top-color:#c8c8c8"></div></div>
<div class="t" style="left:377.4px;top:1349.7px;transform:scaleX(0.991)">Brightness:</div>
<div class="a" style="left:495px;top:1359px;width:1566px;height:7.8px;border-radius:3.6px;background:#3f8fcb"></div>
<div class="a" style="left:2050.2px;top:1353px;width:21px;height:19.8px;border-radius:5.4px;border:2.4px solid #a8a8a8;background:#fcfcfc"></div>
<div class="a" style="left:2198.7px;top:809.7px;width:364.2px;height:364.2px;border-radius:50%;background:conic-gradient(from 90deg,#f00,#f0f,#00f,#0ff,#0f0,#ff0,#f00)"></div>
<div class="a" style="left:2236.2px;top:847.2px;width:289.2px;height:289.2px;border-radius:50%;background:linear-gradient(#efefef,#efefef)"></div>
<div class="a" style="left:2276.4px;top:887.4px;width:207px;height:207.6px;background:linear-gradient(rgba(0,0,0,1),rgba(0,0,0,0)),linear-gradient(90deg,#fff,#f00)"></div>
<div class="a" style="left:2536.8px;top:983.1px;width:18.9px;height:18.9px;border-radius:50%;border:4.2px solid #fff"></div>
<div class="a" style="left:2475px;top:1085.4px;width:18.9px;height:18.9px;border-radius:50%;border:4.2px solid #fff"></div>
<div class="sw" style="left:2108.4px;background:#000"></div>
<div class="sw" style="left:2170.8px;background:#f00"></div>
<div class="sw" style="left:2233.2px;background:#ff0"></div>
<div class="sw" style="left:2295.6px;background:#0f0"></div>
<div class="sw" style="left:2358px;background:#0ff"></div>
<div class="sw" style="left:2420.4px;background:#00f"></div>
<div class="sw" style="left:2482.8px;background:#f0f"></div>
<div class="sw" style="left:2545.2px;background:#fff"></div>
<div class="t" style="left:2109px;top:1243.2px;transform:scaleX(0.93)">R:</div>
<div class="spin" style="left:2138.4px;top:1235.4px;width:238.5px;height:37.8px;border-color:#85b2d8;box-shadow:0 0 0 2.1px rgba(120,170,215,.35)"><div class="v" style="color:#5a5a5a">255</div><div class="ud"><div class="arr up" style="left:3.3px;top:7.2px;border-bottom-color:#c9c9c9"></div><div class="arr dn" style="left:3.3px;top:19.2px;border-top-color:#3a3a3a"></div></div></div>
<div class="t" style="left:2388px;top:1243.2px;transform:scaleX(0.93)">H:</div>
<div class="spin" style="left:2416.2px;top:1235.4px;width:237.6px;height:37.8px"><div class="v" style="">0</div><div class="ud"><div class="arr up" style="left:3.3px;top:7.2px;border-bottom-color:#3a3a3a"></div><div class="arr dn" style="left:3.3px;top:19.2px;border-top-color:#c9c9c9"></div></div></div>
<div class="t" style="left:2109px;top:1291.2px;transform:scaleX(0.93)">G:</div>
<div class="spin" style="left:2138.4px;top:1284.9px;width:238.5px;height:34.5px"><div class="v" style="">0</div><div class="ud"><div class="arr up" style="left:3.3px;top:5.7px;border-bottom-color:#3a3a3a"></div><div class="arr dn" style="left:3.3px;top:17.4px;border-top-color:#c9c9c9"></div></div></div>
<div class="t" style="left:2388px;top:1291.2px;transform:scaleX(0.93)">S:</div>
<div class="spin" style="left:2416.2px;top:1284.9px;width:237.6px;height:34.5px"><div class="v" style="">255</div><div class="ud"><div class="arr up" style="left:3.3px;top:5.7px;border-bottom-color:#c9c9c9"></div><div class="arr dn" style="left:3.3px;top:17.4px;border-top-color:#3a3a3a"></div></div></div>
<div class="t" style="left:2109px;top:1339.2px;transform:scaleX(0.93)">B:</div>
<div class="spin" style="left:2138.4px;top:1333.5px;width:238.5px;height:33.6px"><div class="v" style="">0</div><div class="ud"><div class="arr up" style="left:3.3px;top:5.1px;border-bottom-color:#3a3a3a"></div><div class="arr dn" style="left:3.3px;top:17.1px;border-top-color:#c9c9c9"></div></div></div>
<div class="t" style="left:2388px;top:1339.2px;transform:scaleX(0.93)">V:</div>
<div class="spin" style="left:2416.2px;top:1333.5px;width:237.6px;height:33.6px"><div class="v" style="">255</div><div class="ud"><div class="arr up" style="left:3.3px;top:5.1px;border-bottom-color:#c9c9c9"></div><div class="arr dn" style="left:3.3px;top:17.1px;border-top-color:#3a3a3a"></div></div></div>
<div class="a" style="left:2145.9px;top:1243.2px;width:2.1px;height:24.6px;background:#222"></div>
<div class="btn dis" style="left:2108.4px;top:1379.4px;width:546px;height:36.6px;line-height:33.9px"><span style="transform:scaleX(0.975)">Saving Not Supported</span></div>
<div class="btn" style="left:5.1px;top:1470.9px;width:439.2px;height:36.3px;line-height:36.9px"><span style="transform:scaleX(0.965)">Toggle LED View</span></div>
<div class="btn" style="left:455.4px;top:1470.9px;width:439.8px;height:36.3px;line-height:36.9px"><span style="transform:scaleX(0.923)">Rescan Devices</span></div>
<div class="btn" style="left:905.4px;top:1470.9px;width:424.2px;height:36.3px;line-height:36.9px"><span style="transform:scaleX(0.945)">Save Profile</span></div>
<div class="btn" style="left:1330.2px;top:1470.9px;width:18.6px;height:36.3px"><div class="arr dn" style="left:1.8px;top:13.2px"></div></div>
<div class="btn" style="left:1357.8px;top:1470.9px;width:439.8px;height:36.3px;line-height:36.9px"><span style="transform:scaleX(0.995)">Delete Profile</span></div>
<div class="btn" style="left:1807.2px;top:1470.9px;width:440.4px;height:36.3px;line-height:36.9px"><span style="transform:scaleX(0.981)">Load Profile</span></div>
<div class="btn" style="left:2258.4px;top:1470.9px;width:439.8px;height:36.3px;text-align:left;line-height:33.3px"><span style="margin-left:4.2px;transform-origin:0 50%;transform:scaleX(0.93)"></span><div class="arr dn" style="right:7.8px;top:13.5px;border-top-color:#3a3a3a"></div></div>
</div></body></html>
